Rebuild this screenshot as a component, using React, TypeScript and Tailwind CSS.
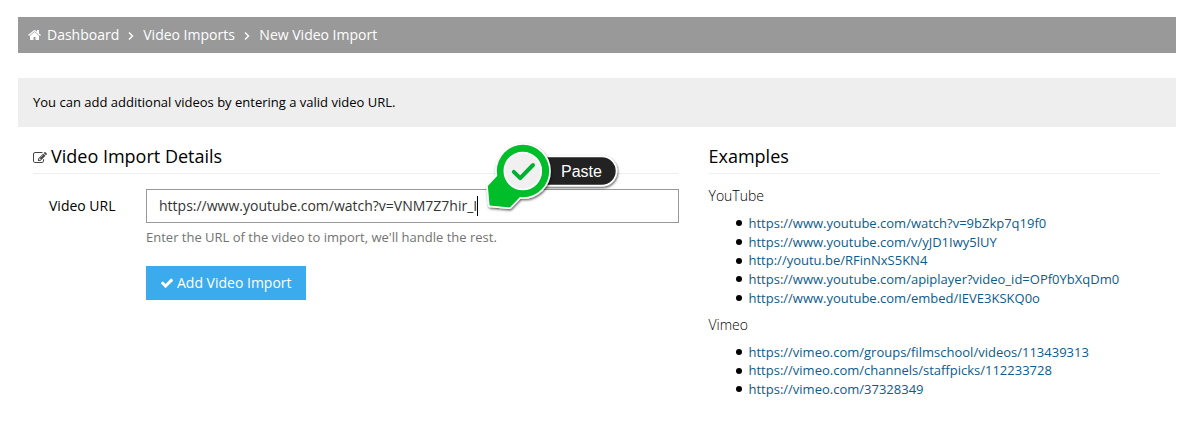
import type { ReactNode } from "react";

function Glyph({ width, d, className }: { width: number; d: string; className: string }) {
  return (
    <svg viewBox={`0 0 ${width} 1792`} fill="currentColor" className={className} aria-hidden="true">
      <path d={d} />
    </svg>
  );
}

const HOME =
  "M1408 992v480q0 26-19 45t-45 19H960v-384H704v384H320q-26 0-45-19t-19-45V992q0-1 .5-3t.5-3l575-474 575 474q1 2 1 6zm223-69l-62 74q-8 9-21 11h-3q-13 0-21-7L832 424l-692 577q-12 8-24 7-13-2-21-11l-62-74q-8-10-7-23.5T37 878l719-599q32-26 76-26t76 26l244 204V288q0-14 9-23t23-9h192q14 0 23 9t9 23v408l219 182q10 8 11 21.5t-7 23.5z";
const EDIT =
  "M888 1184l116-116-152-152-116 116v56h96v96h56zm440-720q-16-16-33 1L945 815q-17 17-1 33t33-1l350-350q17-17 1-33zm80 594v190q0 119-84.5 203.5T1120 1536H288q-119 0-203.5-84.5T0 1248V416q0-119 84.5-203.5T288 128h832q63 0 117 25 15 7 18 23 3 17-9 29l-49 49q-14 14-32 8-23-6-45-6H288q-66 0-113 47t-47 113v832q0 66 47 113t113 47h832q66 0 113-47t47-113v-126q0-13 9-22l64-64q15-15 35-7t20 29zm-96-738l288 288-672 672H640V992zm444 132l-92 92-288-288 92-92q28-28 68-28t68 28l152 152q28 28 28 68t-28 68z";
const CHECK =
  "M1671 566q0 40-28 68l-724 724-136 136q-28 28-68 28t-68-28l-136-136-362-362q-28-28-28-68t28-68l136-136q28-28 68-28t68 28l294 295 656-657q28-28 68-28t68 28l136 136q28 28 28 68z";

function Chevron({ className }: { className: string }) {
  return (
    <svg viewBox="0 0 6 8" className={`mt-px h-2 w-1.5 ${className}`} fill="none" stroke="currentColor" strokeWidth="1.4">
      <path d="M1 0.6L4.5 4L1 7.4" />
    </svg>
  );
}

function Heading({ children }: { children: ReactNode }) {
  return (
    <h2 className="flex h-[34px] items-start border-b border-[#eeeeee] text-[18px] leading-8">{children}</h2>
  );
}

function LinkList({ title, links }: { title: string; links: string[] }) {
  return (
    <section>
      <h3 className="text-sm leading-[18px] font-light">{title}</h3>
      <ul className="mt-[9px] mb-2 pl-[27px] text-[13px] leading-[18.7px]">
        {links.map((link) => (
          <li key={link} className="flex items-center">
            <span className="mr-[7px] size-1.5 rounded-full bg-black" />
            <a href="#" className="text-[#0c5b8d]">{link}</a>
          </li>
        ))}
      </ul>
    </section>
  );
}

function PasteMarker() {
  return (
    <div className="absolute top-[-52px] left-[334px] h-[76px] w-[142px]">
      <svg viewBox="480 137 142 76" className="h-[76px] w-[142px]">
        <defs>
          <filter id="shadow" x="-20%" y="-20%" width="140%" height="150%">
            <feDropShadow dx="0.7" dy="1.4" stdDeviation="1" floodColor="#000" floodOpacity="0.65" />
          </filter>
        </defs>
        <rect x="520" y="156.4" width="96.5" height="29.2" rx="14.6" fill="#222" stroke="#fff" strokeWidth="1.6" filter="url(#shadow)" />
        <g filter="url(#shadow)">
          <g fill="#fff" stroke="#fff" strokeWidth="3.2" strokeLinejoin="round">
            <circle cx="523" cy="171" r="26.2" />
            <path d="M499 174L487.8 186L489.6 205.6L509.8 207.4L520 197Z" />
          </g>
          <g fill="#00bd2c">
            <circle cx="523" cy="171" r="26.2" />
            <path d="M499 174L487.8 186L489.6 205.6L509.8 207.4L520 197Z" />
          </g>
        </g>
        <circle cx="522.8" cy="171" r="18.5" fill="#f0f0f0" stroke="#fff" strokeWidth="1.6" />
        <path d="M513.8 171.8L520.2 178.2L533 165" fill="none" stroke="#00b032" strokeWidth="4" strokeLinecap="round" strokeLinejoin="round" />
      </svg>
      <span className="absolute top-[26px] left-[81px] font-['Liberation_Sans',sans-serif] text-base leading-[18px] text-white">
        Paste
      </span>
    </div>
  );
}

export default function App() {
  return (
    <main className="h-[430px] w-full bg-white px-[18px] pt-[17px] font-['Open_Sans','Noto_Sans',sans-serif] text-black">
      <nav className="flex h-9 items-center bg-[#999999] pl-[10px] text-sm text-white">
        <Glyph width={1664} d={HOME} className="mr-1.5 h-3.5 w-[13px]" />
        <span>Dashboard</span>
        <Chevron className="mx-[9px]" />
        <span>Video Imports</span>
        <Chevron className="mr-[9.5px] ml-[9px]" />
        <span>New Video Import</span>
      </nav>

      <div className="mt-[25px] flex h-[49px] items-center bg-[#eeeeee] px-[15px] text-[13px]">
        You can add additional videos by entering a valid video URL.
      </div>

      <div className="mt-[13px] flex gap-[29.5px] pr-4 pl-[15px]">
        <section className="w-[646px]">
          <Heading>
            <Glyph width={1792} d={EDIT} className="mt-[11px] mr-1 h-3.5 w-3.5 text-[#444444]" />
            Video Import Details
          </Heading>
          <div className="mt-[15px] flex">
            <label htmlFor="url" className="w-[113px] pl-4 text-sm leading-[34px]">
              Video URL
            </label>
            <div className="relative w-[533px]">
              <div id="url" className="flex h-[34px] items-center border border-[#999999] pl-3 text-sm text-[#333333]">
                https://www.youtube.com/watch?v=VNM7Z7hir_I
                <span className="h-5 w-px bg-black" />
              </div>
              <p className="mt-[5px] text-[13px] leading-[19px] text-[#737373]">
                Enter the URL of the video to import, we'll handle the rest.
              </p>
              <button className="mt-[19px] flex h-[34px] w-40 items-center bg-[#3babed] pl-3.5 text-sm text-white">
                <Glyph width={1792} d={CHECK} className="mr-[3px] h-3.5 w-3.5" />
                Add Video Import
              </button>
              <PasteMarker />
            </div>
          </div>
        </section>

        <aside className="min-w-0 flex-1">
          <Heading>Examples</Heading>
          <div className="mt-[13px]">
            <LinkList
              title="YouTube"
              links={[
                "https://www.youtube.com/watch?v=9bZkp7q19f0",
                "https://www.youtube.com/v/yJD1Iwy5lUY",
                "http://youtu.be/RFinNxS5KN4",
                "https://www.youtube.com/apiplayer?video_id=OPf0YbXqDm0",
                "https://www.youtube.com/embed/IEVE3KSKQ0o",
              ]}
            />
            <LinkList
              title="Vimeo"
              links={[
                "https://vimeo.com/groups/filmschool/videos/113439313",
                "https://vimeo.com/channels/staffpicks/112233728",
                "https://vimeo.com/37328349",
              ]}
            />
          </div>
        </aside>
      </div>
    </main>
  );
}
